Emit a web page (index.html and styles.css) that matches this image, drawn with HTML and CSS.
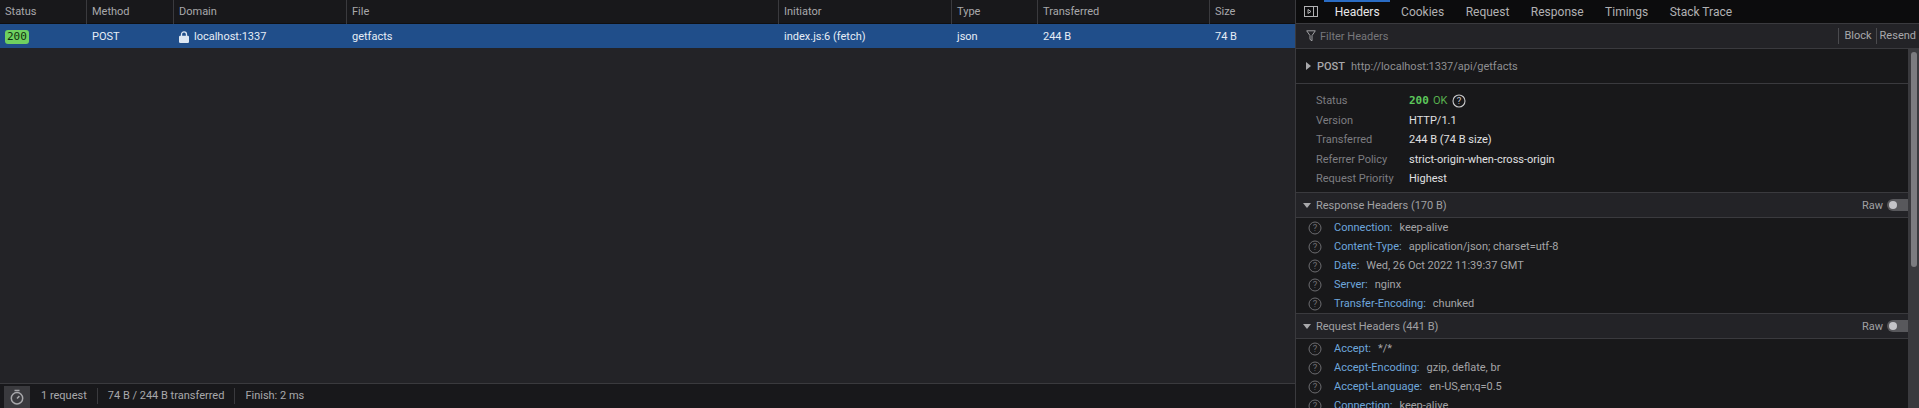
FILE: index.html
```html
<!DOCTYPE html>
<html lang="en">
<head>
<meta charset="utf-8">
<title>Network</title>
<link rel="stylesheet" href="styles.css">
</head>
<body>
<div class="app">
  <section class="net">
    <div class="grid head">
      <div class="cell">Status</div><div class="cell">Method</div><div class="cell">Domain</div><div class="cell">File</div><div class="cell">Initiator</div><div class="cell">Type</div><div class="cell">Transferred</div><div class="cell">Size</div>
    </div>
    <div class="grid row">
      <div class="cell"><span class="badge">200</span></div>
      <div class="cell">POST</div>
      <div class="cell dom"><svg class="lock" viewBox="0 0 10 12"><path d="M2.5 5V3.4a2.5 2.5 0 0 1 5 0V5" fill="none" stroke="currentColor" stroke-width="1.3"/><rect x="0" y="4.8" width="10" height="7.2" rx="1.2" fill="currentColor"/></svg>localhost:1337</div>
      <div class="cell">getfacts</div><div class="cell">index.js:6 (fetch)</div><div class="cell">json</div><div class="cell">244 B</div><div class="cell">74 B</div>
    </div>
    <div class="empty"></div>
    <footer class="foot">
      <div class="timer"><svg viewBox="0 0 16 16" class="stop"><circle cx="8" cy="9.3" r="5.7" fill="none" stroke="currentColor" stroke-width="1.5"/><path d="M5.5 1.5h5M8 9.5l2.4-2.4" fill="none" stroke="currentColor" stroke-width="1.5"/></svg></div>
      <span class="stat">1 request</span><span class="stat">74 B / 244 B transferred</span><span class="stat last">Finish: 2 ms</span>
    </footer>
  </section>
  <aside class="side">
    <nav class="tabs">
      <svg class="toggle" viewBox="0 0 14 14"><rect x=".5" y="1.5" width="13" height="10" fill="none" stroke="currentColor"/><path d="M9.5 1.5v10" stroke="currentColor"/><path d="M4 4.5l3 2-3 2z" fill="none" stroke="currentColor"/></svg>
      <span class="tab active">Headers</span><span class="tab">Cookies</span><span class="tab">Request</span><span class="tab">Response</span><span class="tab">Timings</span><span class="tab">Stack Trace</span>
    </nav>
    <div class="filter">
      <svg class="funnel" viewBox="0 0 10 12"><path d="M.7.8h8.6L6 5.6v5.2l-2-1.4V5.6z" fill="none" stroke="currentColor" stroke-width="1"/></svg>
      <span class="ph">Filter Headers</span>
      <span class="act">Block</span><span class="act resend">Resend</span>
    </div>
    <div class="body">
      <div class="content">
        <div class="summary"><span class="tri right"></span><b>POST</b><span>http://localhost:1337/api/getfacts</span></div>
        <dl class="meta">
          <div class="kv"><dt>Status</dt><dd class="ok"><b>200</b> OK <svg class="q white" viewBox="0 0 14 14"><circle cx="7" cy="7" r="6" fill="none" stroke="currentColor" stroke-width="1.1"/><text x="7" y="10.2" text-anchor="middle" class="qt">?</text></svg></dd></div>
          <div class="kv"><dt>Version</dt><dd>HTTP/1.1</dd></div>
          <div class="kv"><dt>Transferred</dt><dd>244 B (74 B size)</dd></div>
          <div class="kv"><dt>Referrer Policy</dt><dd>strict-origin-when-cross-origin</dd></div>
          <div class="kv"><dt>Request Priority</dt><dd>Highest</dd></div>
        </dl>
        <div class="sec"><span class="tri down"></span>Response Headers (170 B)<span class="raw">Raw</span><span class="sw"></span></div>
        <ul class="hdrs">
          <li><svg class="q" viewBox="0 0 14 14"><circle cx="7" cy="7" r="6" fill="none" stroke="currentColor"/><text x="7" y="10.2" text-anchor="middle" class="qt">?</text></svg><span class="k">Connection:</span>keep-alive</li>
          <li><svg class="q" viewBox="0 0 14 14"><circle cx="7" cy="7" r="6" fill="none" stroke="currentColor"/><text x="7" y="10.2" text-anchor="middle" class="qt">?</text></svg><span class="k">Content-Type:</span>application/json; charset=utf-8</li>
          <li><svg class="q" viewBox="0 0 14 14"><circle cx="7" cy="7" r="6" fill="none" stroke="currentColor"/><text x="7" y="10.2" text-anchor="middle" class="qt">?</text></svg><span class="k">Date:</span>Wed, 26 Oct 2022 11:39:37 GMT</li>
          <li><svg class="q" viewBox="0 0 14 14"><circle cx="7" cy="7" r="6" fill="none" stroke="currentColor"/><text x="7" y="10.2" text-anchor="middle" class="qt">?</text></svg><span class="k">Server:</span>nginx</li>
          <li><svg class="q" viewBox="0 0 14 14"><circle cx="7" cy="7" r="6" fill="none" stroke="currentColor"/><text x="7" y="10.2" text-anchor="middle" class="qt">?</text></svg><span class="k">Transfer-Encoding:</span>chunked</li>
        </ul>
        <div class="sec"><span class="tri down"></span>Request Headers (441 B)<span class="raw">Raw</span><span class="sw"></span></div>
        <ul class="hdrs">
          <li><svg class="q" viewBox="0 0 14 14"><circle cx="7" cy="7" r="6" fill="none" stroke="currentColor"/><text x="7" y="10.2" text-anchor="middle" class="qt">?</text></svg><span class="k">Accept:</span>*/*</li>
          <li><svg class="q" viewBox="0 0 14 14"><circle cx="7" cy="7" r="6" fill="none" stroke="currentColor"/><text x="7" y="10.2" text-anchor="middle" class="qt">?</text></svg><span class="k">Accept-Encoding:</span>gzip, deflate, br</li>
          <li><svg class="q" viewBox="0 0 14 14"><circle cx="7" cy="7" r="6" fill="none" stroke="currentColor"/><text x="7" y="10.2" text-anchor="middle" class="qt">?</text></svg><span class="k">Accept-Language:</span>en-US,en;q=0.5</li>
          <li><svg class="q" viewBox="0 0 14 14"><circle cx="7" cy="7" r="6" fill="none" stroke="currentColor"/><text x="7" y="10.2" text-anchor="middle" class="qt">?</text></svg><span class="k">Connection:</span>keep-alive</li>
        </ul>
      </div>
      <div class="scroll"><div class="thumb"></div></div>
    </div>
  </aside>
</div>
</body>
</html>
```
FILE: styles.css
```css
* { box-sizing: border-box; }
html, body { margin: 0; height: 100%; background: #232327; overflow: hidden; }
body { font-family: Roboto, "Noto Sans", sans-serif; font-size: 11px; color: #d4d4d6; }
.app { display: flex; width: 1919px; height: 408px; }
.net { width: 1295px; display: flex; flex-direction: column; background: #232327; }
.grid { display: grid; grid-template-columns: 86px 87px 173px 432px 173px 86px 172px 86px; }
.head { height: 24px; background: #18181b; color: #a8a8ab; border-bottom: 1px solid #0f0f11; }
.head .cell { border-left: 1px solid #3a3a3e; line-height: 24px; padding-left: 5px; }
.head .cell:first-child { border-left: 0; }
.row { height: 24px; background: #204e8a; color: #e6edf6; }
.row .cell { line-height: 25px; padding-left: 6px; display: flex; align-items: center; white-space: nowrap; }
.badge { background: #6fd060; color: #10300f; border-radius: 3px; font-family: "DejaVu Sans Mono", monospace; font-size: 11px; line-height: 14px; height: 14px; padding: 0 2px; margin-left: -1px; }
.lock { width: 10px; height: 12px; margin-right: 5px; color: #dce6f2; }
.empty { flex: 1; }
.foot { height: 25px; background: #18181b; border-top: 1px solid #3a3a3e; display: flex; align-items: center; color: #a8a8ab; }
.timer { width: 26px; height: 22px; margin: 2px 11px 0 4px; background: #3a3a3e; display: flex; align-items: center; justify-content: center; color: #a8a8ab; }
.stop { width: 16px; height: 16px; }
.stat { padding-right: 10px; margin-right: 10px; border-right: 1px solid #3a3a3e; line-height: 16px; }
.stat.last { border-right: 0; }
.side { width: 624px; display: flex; flex-direction: column; border-left: 1px solid #3a3a3e; background: #18181a; }
.tabs { height: 24px; background: #0c0c0d; border-bottom: 1px solid #3a3a3e; display: flex; align-items: center; padding-left: 8px; color: #b1b1b3; font-size: 12px; }
.toggle { width: 14px; height: 14px; margin-right: 6px; color: #b1b1b3; flex: none; }
.tab { padding: 0 10.75px; height: 23px; line-height: 20px; border-top: 2px solid transparent; }
.tab.active { color: #e8e8ea; border-top-color: #2a6cc4; }
.filter { height: 25px; background: #232327; border-bottom: 1px solid #3a3a3e; display: flex; align-items: center; padding-left: 10px; color: #77777b; }
.funnel { width: 10px; height: 12px; margin-right: 4px; color: #a0a0a3; }
.ph { flex: 1; }
.act { border-left: 1px solid #4a4a4e; padding: 0 4px 0 5px; line-height: 16px; color: #a8a8ab; }
.resend { padding: 0 3px 0 3px; }
.body { flex: 1; display: flex; min-height: 0; }
.content { flex: 1; min-width: 0; overflow: hidden; }
.scroll { width: 11px; background: #3a3a3e; padding: 3px 2px 0 3px; flex: none; }
.thumb { height: 215px; background: #7c7c80; border-radius: 3px; }
.summary { height: 35px; border-bottom: 1px solid #3a3a3e; display: flex; align-items: center; padding-left: 10px; color: #8f8f92; }
.summary b { font-weight: 500; margin-right: 6px; color: #a8a8ab; margin-left: 6px; }
.tri { display: inline-block; width: 0; height: 0; }
.tri.right { border-left: 5px solid #a8a8ab; border-top: 4px solid transparent; border-bottom: 4px solid transparent; }
.tri.down { border-top: 5px solid #a8a8ab; border-left: 4px solid transparent; border-right: 4px solid transparent; margin-right: 5px; }
.meta { margin: 0; padding: 7px 0 0; height: 109px; border-bottom: 1px solid #3a3a3e; }
.kv { display: flex; height: 19.5px; line-height: 19.5px; padding-left: 20px; }
.kv dt { width: 93px; color: #7d7d81; }
.kv dd { margin: 0; color: #e0e0e2; display: flex; align-items: center; }
.ok { color: #58b14f !important; gap: 4px; }
.ok b { font-family: "DejaVu Sans Mono", monospace; font-size: 11px; color: #5cc75a; }
.q { width: 14px; height: 14px; color: #6c6c70; flex: none; }
.q.white { color: #c8c8ca; margin-left: 1px; }
.qt { font-family: Roboto, sans-serif; font-size: 9.5px; fill: currentColor; }
.sec { height: 25px; background: #232327; border-bottom: 1px solid #3a3a3e; display: flex; align-items: center; padding-left: 7px; color: #a0a0a3; }
.raw { margin-left: auto; margin-right: 4px; color: #a0a0a3; }
.sw { width: 21px; height: 12px; border-radius: 6px 0 0 6px; background: #58585c; position: relative; }
.sw::before { content: ""; position: absolute; left: 2px; top: 2px; width: 8px; height: 8px; border-radius: 50%; background: #c4c4c8; }
.hdrs { margin: 0; padding: 0 0 1px; list-style: none; border-bottom: 1px solid #3a3a3e; height: 96px; }
.hdrs li { display: flex; align-items: center; height: 19px; padding-left: 12px; color: #a4a4a7; white-space: nowrap; }
.hdrs .q { margin-right: 12px; }
.k { color: #6ea6dc; margin-right: 7px; }
```
